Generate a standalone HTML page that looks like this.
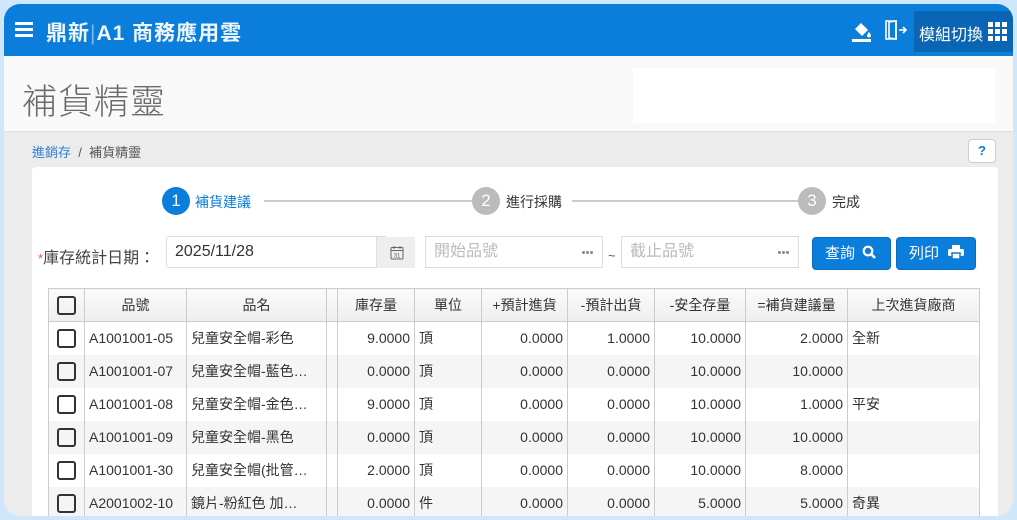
<!DOCTYPE html>
<html><head><meta charset="utf-8"><style>
*{box-sizing:border-box;margin:0;padding:0}
body{width:1017px;height:520px;overflow:hidden;background:#cfe6fb;font-family:"Liberation Sans","Noto Sans CJK TC",sans-serif;position:relative}
.frame{position:absolute;left:4px;top:4px;width:1009px;height:512px;border-radius:16px;overflow:hidden;background:#ececec}
.top{position:absolute;left:0;top:0;width:100%;height:52px;background:#0b7ddb;color:#fff}
.hdr{position:absolute;left:0;top:52px;width:100%;height:76px;background:#f9f9f9;border-bottom:1px solid #ddd}
.a{position:absolute;white-space:nowrap}
.card{position:absolute;left:28px;top:163px;width:966px;height:360px;background:#fff;border-radius:4px}
table{border-collapse:collapse;position:absolute;left:44px;top:284px;font-size:14px;color:#333}
th{height:33px;font-weight:normal;background:linear-gradient(#fafafa,#eee);border:1px solid #ccc;text-align:center}
td{height:33px;border-left:1px solid #ccc;border-right:1px solid #ccc;padding:0 4px;white-space:nowrap}
tr:nth-child(odd) td{background:#f5f5f5}
td.n{text-align:right}
.cb{display:inline-block;width:19px;height:19px;border:2px solid #333;border-radius:3px;vertical-align:middle}
.inp{position:absolute;height:32px;border:1px solid #ddd;background:#fff;font-size:16px;padding:3px 8px 0;line-height:24px;white-space:nowrap}
.btn{position:absolute;height:33px;background:#0b7ddb;border:1px solid #0a6cc0;border-radius:4px;color:#fff;font-size:15px;padding:0 12px;line-height:31px;white-space:nowrap}
.step{position:absolute;width:28px;height:28px;border-radius:50%;color:#fff;text-align:center;line-height:28px;font-size:17px}
.dots{position:absolute;top:14px;width:3px;height:3px;border-radius:50%;background:#888;box-shadow:4px 0 #888,8px 0 #888;right:17px}
</style></head><body>
<div class="frame">
<div class="top">
 <div class="a" style="left:11px;top:18px;width:18px;height:3px;background:#fff;box-shadow:0 6px 0 #fff,0 12px 0 #fff"></div>
 <div class="a" style="left:42px;top:13px;font-size:21px;font-weight:600;letter-spacing:1px;color:#eef5fc">鼎新<span style="font-weight:normal;opacity:.5">|</span>A1 商務應用雲</div>
 <svg class="a" style="left:848px;top:17px" width="22" height="22" viewBox="0 0 22 22"><path d="M3 8l6-6 7 7-6 6z" fill="#fff"/><path d="M17 11c0 0-2 2.5-2 3.5a2 2 0 004 0c0-1-2-3.5-2-3.5z" fill="#fff"/><rect x="0" y="18" width="19" height="3" fill="#fff"/></svg>
 <svg class="a" style="left:880px;top:15px" width="24" height="22" viewBox="0 0 24 22" fill="none" stroke="#fff" stroke-width="1.6"><path d="M2 2h10v18H2z"/><path d="M5 3l7-1v18l-7-1z"/><path d="M15 11h7M19 8l3 3-3 3"/></svg>
 <div class="a" style="left:910px;top:7px;width:99px;height:41px;background:#0a66b4"></div>
 <div class="a" style="left:915px;top:17px;font-size:16px">模組切換</div>
 <svg class="a" style="left:984px;top:18px" width="19" height="19"><g fill="#fff"><rect x="0" y="0" width="5" height="5"/><rect x="7" y="0" width="5" height="5"/><rect x="14" y="0" width="5" height="5"/><rect x="0" y="7" width="5" height="5"/><rect x="7" y="7" width="5" height="5"/><rect x="14" y="7" width="5" height="5"/><rect x="0" y="14" width="5" height="5"/><rect x="7" y="14" width="5" height="5"/><rect x="14" y="14" width="5" height="5"/></g></svg>
</div>
<div class="hdr">
 <div class="a" style="left:18px;top:18px;font-size:35px;color:#6a6a6a;font-weight:300;letter-spacing:1px">補貨精靈</div>
 <div class="a" style="left:629px;top:12px;width:362px;height:55px;background:#fff"></div>
</div>
<div class="a" style="left:28px;top:138px;font-size:13px;color:#555"><span style="color:#2a7fd4">進銷存</span> &nbsp;/&nbsp; 補貨精靈</div>
<div class="a" style="left:964px;top:135px;width:28px;height:24px;background:#fff;border:1px solid #ccc;border-radius:4px;color:#0b7ddb;font-weight:bold;text-align:center;font-size:13px;line-height:22px">?</div>
<div class="card"></div>
<div class="a" style="left:260px;top:196px;width:210px;height:2px;background:#ccc"></div>
<div class="a" style="left:568px;top:196px;width:226px;height:2px;background:#ccc"></div>
<div class="step" style="left:158px;top:183px;background:#0b7ddb">1</div>
<div class="a" style="left:191px;top:188px;font-size:14px;color:#0b7ddb">補貨建議</div>
<div class="step" style="left:468px;top:183px;background:#bbb">2</div>
<div class="a" style="left:502px;top:188px;font-size:14px;color:#333">進行採購</div>
<div class="step" style="left:794px;top:183px;background:#bbb">3</div>
<div class="a" style="left:828px;top:188px;font-size:14px;color:#333">完成</div>
<div class="a" style="left:34px;top:240px;font-size:16px;color:#444"><span style="color:#e55;font-size:13px">*</span>庫存統計日期：</div>
<div class="inp" style="left:162px;top:232px;width:222px;color:#333;border-radius:3px">2025/11/28</div>
<div class="a" style="left:372px;top:233px;width:39px;height:31px;background:#eee;border-left:1px solid #ddd"><svg style="position:absolute;left:13px;top:8px" width="14" height="15" viewBox="0 0 14 15" fill="none" stroke="#666"><rect x="1" y="2.5" width="12" height="11.5" rx="1"/><path d="M1 5.5h12M4 1v3M10 1v3"/><text x="7" y="12.5" font-size="6" text-anchor="middle" fill="#666" stroke="none" font-family="Liberation Sans">31</text></svg></div>
<div class="inp" style="left:421px;top:232px;width:178px;color:#bbb">開始品號<span class="dots"></span></div>
<div class="a" style="left:604px;top:244px;font-size:13px;color:#555">~</div>
<div class="inp" style="left:617px;top:232px;width:178px;color:#bbb">截止品號<span class="dots"></span></div>
<div class="btn" style="left:808px;top:233px;width:79px">查詢 <svg width="14" height="14" viewBox="0 0 14 14" style="vertical-align:-1px;margin-left:3px"><circle cx="6" cy="6" r="4.3" fill="none" stroke="#fff" stroke-width="2.2"/><path d="M9 9l4 4" stroke="#fff" stroke-width="2.6"/></svg></div>
<div class="btn" style="left:892px;top:233px;width:80px">列印 <svg width="16" height="14" viewBox="0 0 16 14" style="vertical-align:-1px;margin-left:5px"><rect x="4" y="0" width="8" height="4" fill="#fff"/><rect x="0" y="4" width="16" height="7" rx="1.5" fill="#fff"/><rect x="4" y="8" width="8" height="6" fill="#fff" stroke="#0b7ddb" stroke-width="1.5"/></svg></div>
<table>
<tr><th style="width:36px"><span class="cb"></span></th><th style="width:102px">品號</th><th style="width:140px">品名</th><th style="width:11px"></th><th style="width:77px">庫存量</th><th style="width:67px">單位</th><th style="width:86px">+預計進貨</th><th style="width:87px">-預計出貨</th><th style="width:91px">-安全存量</th><th style="width:102px">=補貨建議量</th><th style="width:132px">上次進貨廠商</th></tr>
<tr><td style="text-align:center"><span class="cb"></span></td><td>A1001001-05</td><td>兒童安全帽-彩色</td><td></td><td class="n">9.0000</td><td>頂</td><td class="n">0.0000</td><td class="n">1.0000</td><td class="n">10.0000</td><td class="n">2.0000</td><td>全新</td></tr>
<tr><td style="text-align:center"><span class="cb"></span></td><td>A1001001-07</td><td>兒童安全帽-藍色…</td><td></td><td class="n">0.0000</td><td>頂</td><td class="n">0.0000</td><td class="n">0.0000</td><td class="n">10.0000</td><td class="n">10.0000</td><td></td></tr>
<tr><td style="text-align:center"><span class="cb"></span></td><td>A1001001-08</td><td>兒童安全帽-金色…</td><td></td><td class="n">9.0000</td><td>頂</td><td class="n">0.0000</td><td class="n">0.0000</td><td class="n">10.0000</td><td class="n">1.0000</td><td>平安</td></tr>
<tr><td style="text-align:center"><span class="cb"></span></td><td>A1001001-09</td><td>兒童安全帽-黑色</td><td></td><td class="n">0.0000</td><td>頂</td><td class="n">0.0000</td><td class="n">0.0000</td><td class="n">10.0000</td><td class="n">10.0000</td><td></td></tr>
<tr><td style="text-align:center"><span class="cb"></span></td><td>A1001001-30</td><td>兒童安全帽(批管…</td><td></td><td class="n">2.0000</td><td>頂</td><td class="n">0.0000</td><td class="n">0.0000</td><td class="n">10.0000</td><td class="n">8.0000</td><td></td></tr>
<tr><td style="text-align:center"><span class="cb"></span></td><td>A2001002-10</td><td>鏡片-粉紅色 加…</td><td></td><td class="n">0.0000</td><td>件</td><td class="n">0.0000</td><td class="n">0.0000</td><td class="n">5.0000</td><td class="n">5.0000</td><td>奇異</td></tr>
</table>
</div>
</body></html>
